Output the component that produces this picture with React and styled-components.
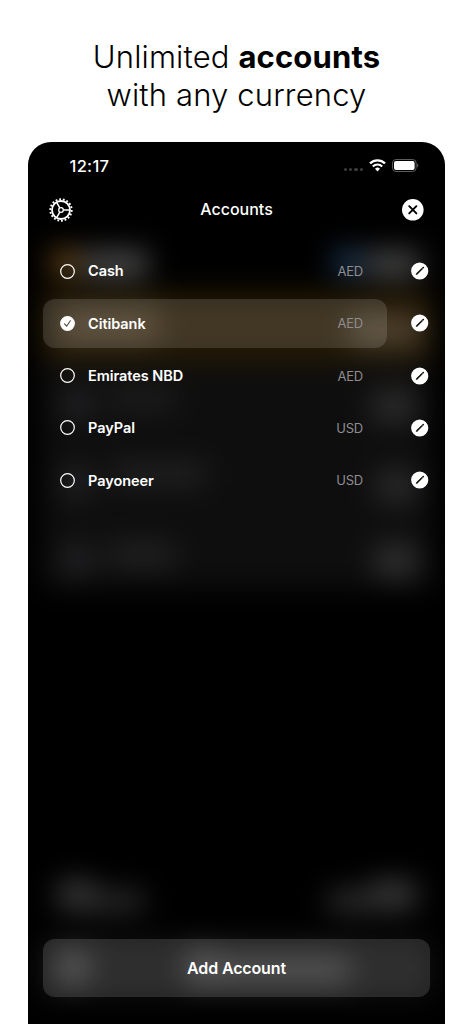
import React from "react";
import styled, { createGlobalStyle } from "styled-components";

const accounts = [
  { name: "Cash", currency: "AED" },
  { name: "Citibank", currency: "AED", selected: true },
  { name: "Emirates NBD", currency: "AED" },
  { name: "PayPal", currency: "USD" },
  { name: "Payoneer", currency: "USD" },
];

function GearIcon() {
  return (
    <svg width="26" height="26" viewBox="0 0 26 26" fill="none" stroke="#fff">
      <circle cx="13" cy="13" r="9" strokeWidth="1.8" />
      <circle
        cx="13"
        cy="13"
        r="10.7"
        strokeWidth="1.9"
        pathLength="72"
        strokeDasharray="2 2"
      />
      <circle cx="13" cy="13" r="2.3" strokeWidth="1.3" />
      <path
        d="M15.3 13H22M11.8 10.9L8.5 5.2M11.8 15.1L8.5 20.8"
        strokeWidth="1.5"
      />
    </svg>
  );
}

function CloseIcon() {
  return (
    <svg width="22" height="22" viewBox="0 0 22 22" fill="none">
      <circle cx="10.8" cy="10.8" r="10.8" fill="#fff" />
      <path
        d="M7.2 7.2l7.2 7.2M14.4 7.2l-7.2 7.2"
        stroke="#000"
        strokeWidth="1.9"
        strokeLinecap="round"
      />
    </svg>
  );
}

function WifiIcon() {
  return (
    <svg width="17" height="13" viewBox="0 0 17 13" fill="none" stroke="#fff">
      <path d="M1 4.4a10.6 10.6 0 0 1 15 0" strokeWidth="2.3" />
      <path d="M3.8 7.4a6.6 6.6 0 0 1 9.4 0" strokeWidth="2.1" />
      <path
        d="M8.5 12.4L6 9.8a3.6 3.6 0 0 1 5 0z"
        fill="#fff"
        stroke="none"
      />
    </svg>
  );
}

function BatteryIcon() {
  return (
    <svg width="27" height="13" viewBox="0 0 27 13" fill="none">
      <rect x="0.5" y="0.5" width="23.6" height="12" rx="3.4" stroke="#5c5c5c" />
      <rect x="2" y="2" width="20.6" height="9" rx="2" fill="#fff" />
      <path d="M25.2 4.6c1.5.6 1.5 3.2 0 3.8z" fill="#666" />
    </svg>
  );
}

function RadioIcon({ checked }) {
  return (
    <svg width="15" height="15" viewBox="0 0 15 15" fill="none">
      <circle
        cx="7.5"
        cy="7.5"
        r="6.8"
        stroke="#fff"
        strokeWidth="1.2"
        fill={checked ? "#fff" : "none"}
      />
      {checked && (
        <path
          d="M4.5 7.9l2.1 2.3 3.7-5.4"
          stroke="#514530"
          strokeWidth="1.1"
          strokeLinecap="round"
          strokeLinejoin="round"
        />
      )}
    </svg>
  );
}

function PencilIcon() {
  return (
    <svg width="18" height="18" viewBox="0 0 18 18" fill="none">
      <circle cx="8.7" cy="9" r="8.6" fill="#fff" />
      <path d="M5.6 12.1l5.7-5.6" stroke="#15120c" strokeWidth="1.6" />
      <path d="M11.8 6l.5-.5" stroke="#15120c" strokeWidth="1.6" strokeLinecap="round" />
      <path d="M4.7 13l.5-1.6 1.1 1.1z" fill="#15120c" />
    </svg>
  );
}

export default function App() {
  return (
    <Page>
      <GlobalStyle />
      <Headline>
        <HeadLine>
          Unlimited <b>accounts</b>
        </HeadLine>
        <HeadLine>with any currency</HeadLine>
      </Headline>
      <Phone>
        <Backdrop />
        <StatusBar>
          <Clock>12:17</Clock>
          <StatusIcons>
            <Signal>
              <i />
              <i />
              <i />
              <i />
            </Signal>
            <WifiIcon />
            <BatteryIcon />
          </StatusIcons>
        </StatusBar>
        <Header>
          <IconButton>
            <GearIcon />
          </IconButton>
          <Title>Accounts</Title>
          <IconButton>
            <CloseIcon />
          </IconButton>
        </Header>
        <List>
          {accounts.map((account) => (
            <Row key={account.name}>
              <Account $selected={account.selected}>
                <RadioIcon checked={account.selected} />
                <Name>{account.name}</Name>
                <Currency>{account.currency}</Currency>
              </Account>
              <IconButton>
                <PencilIcon />
              </IconButton>
            </Row>
          ))}
        </List>
        <AddButton>Add Account</AddButton>
      </Phone>
    </Page>
  );
}

const GlobalStyle = createGlobalStyle`
  body {
    margin: 0;
    background: #fff;
  }

  * {
    box-sizing: border-box;
  }
`;

const Page = styled.div`
  width: 473px;
  height: 1024px;
  overflow: hidden;
  display: flex;
  flex-direction: column;
  align-items: center;
  background: #fff;
  font-family: Inter, "Liberation Sans", sans-serif;
`;

const Headline = styled.h1`
  margin: 0;
  padding-top: 38px;
  height: 142px;
  flex: none;
  font-size: 31px;
  font-weight: 300;
  line-height: 38px;
  letter-spacing: 0.15px;
  text-align: center;
  color: #000;

  b {
    font-weight: 700;
  }
`;

const HeadLine = styled.span`
  display: block;
  white-space: nowrap;
`;

const Phone = styled.main`
  position: relative;
  isolation: isolate;
  width: 417px;
  flex: 1;
  display: flex;
  flex-direction: column;
  padding: 0 15px 27px;
  border-radius: 23px 23px 0 0;
  background: #000;
  color: #fff;
  overflow: hidden;
`;

/* one soft patch: colour, left, top, width, height */
const patch = (color, x, y, w, h) =>
  `linear-gradient(${color}, ${color}) ${x}px ${y}px / ${w}px ${h}px no-repeat`;

/* the dimmed screen that shows through behind the sheet */
const Backdrop = styled.div`
  position: absolute;
  inset: 0;
  z-index: -1;
  filter: blur(14px);
  background: ${[
    patch("#6a4818", 24, 108, 26, 26),
    patch("#484848", 54, 108, 66, 28),
    patch("#1c3752", 306, 108, 28, 26),
    patch("#444444", 338, 108, 54, 28),
    patch("#4a3c26", 30, 166, 100, 34),
    patch("#4e4230", 322, 172, 72, 32),
    patch("#261a04", 14, 150, 389, 68),
    patch("#222225", 34, 246, 30, 32),
    patch("#1e1e1e", 80, 246, 68, 22),
    patch("#2c2c2c", 344, 248, 44, 32),
    patch("#222225", 34, 324, 30, 32),
    patch("#212121", 84, 320, 94, 24),
    patch("#2a2a2a", 348, 328, 42, 32),
    patch("#222225", 34, 402, 30, 32),
    patch("#212121", 80, 400, 68, 26),
    patch("#2e2e2e", 346, 402, 44, 34),
    patch("#0e0e0e", 14, 218, 389, 228),
    patch("#383838", 30, 738, 36, 30),
    patch("#2a2a2a", 62, 748, 54, 22),
    patch("#2e2e2e", 300, 748, 50, 22),
    patch("#383838", 342, 738, 46, 30),
    patch("#404040", 30, 808, 30, 34),
    patch("#414141", 158, 808, 30, 34),
    patch("#3a3a3a", 188, 814, 134, 28),
    patch("#101010", 14, 796, 389, 60),
  ].join(", ")};
`;

const StatusBar = styled.div`
  display: flex;
  justify-content: space-between;
  align-items: center;
  height: 47px;
  padding: 0 11px 0 26.5px;
`;

const Clock = styled.span`
  padding-top: 1px;
  font-size: 16.5px;
  font-weight: 500;
  letter-spacing: 0.3px;
`;

const StatusIcons = styled.div`
  display: flex;
  align-items: center;
  gap: 6px;
`;

const Signal = styled.div`
  display: flex;
  gap: 2px;
  padding-top: 8px;

  i {
    width: 3.3px;
    height: 3.3px;
    border-radius: 50%;
    background: #3c3c3c;
  }
`;

const Header = styled.header`
  display: flex;
  justify-content: space-between;
  align-items: center;
  height: 41px;
  padding: 0 6px 0 5px;
`;

const IconButton = styled.button`
  display: flex;
  padding: 0;
  border: 0;
  background: none;
`;

const Title = styled.h2`
  margin: 0;
  padding: 0 3px 1px 0;
  font-size: 16px;
  font-weight: 500;
`;

const List = styled.div`
  display: flex;
  flex-direction: column;
  gap: 3.3px;
  padding-top: 16.6px;
`;

const Row = styled.div`
  display: flex;
  justify-content: space-between;
  align-items: center;
  padding-right: 1px;
`;

const Account = styled.div`
  display: flex;
  align-items: center;
  width: 344px;
  height: 49px;
  padding: 0 24px 0 17px;
  border-radius: 12px;
  background: ${(props) =>
    props.$selected ? "rgba(255, 255, 255, 0.13)" : "transparent"};
`;

const Name = styled.span`
  flex: 1;
  padding: 0 0 0.5px 13px;
  font-size: 14.5px;
  font-weight: 600;
  letter-spacing: -0.05px;
`;

const Currency = styled.span`
  font-size: 13px;
  letter-spacing: -0.2px;
  color: #8e8c90;
`;

const AddButton = styled.button`
  margin-top: auto;
  padding: 0;
  height: 58.5px;
  border: 1px solid rgba(255, 255, 255, 0.01);
  border-radius: 12px;
  background: rgba(255, 255, 255, 0.13);
  color: #fff;
  font-family: inherit;
  font-size: 16px;
  font-weight: 600;
  letter-spacing: -0.15px;
`;
